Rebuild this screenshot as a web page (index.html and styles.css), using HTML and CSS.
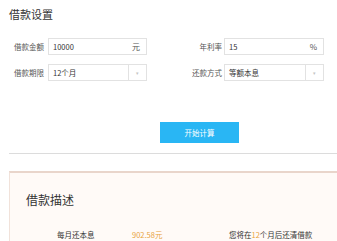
FILE: index.html
```html
<!DOCTYPE html>
<html lang="zh-CN">
<head>
    <meta charset="UTF-8">
    <meta name="viewport" content="width=device-width, initial-scale=1.0">
    <link rel="stylesheet" href="styles.css">
</head>
<body>
    <div class="page">
        <h2 class="title">借款设置</h2>

        <div class="form-row">
            <div class="field">
                <label class="label">借款金额</label>
                <div class="box">
                    <span class="value">10000</span>
                    <span class="unit">元</span>
                </div>
            </div>
            <div class="field field-right">
                <label class="label">年利率</label>
                <div class="box">
                    <span class="value">15</span>
                    <span class="unit">%</span>
                </div>
            </div>
        </div>

        <div class="form-row">
            <div class="field">
                <label class="label">借款期限</label>
                <div class="box select">
                    <span class="value">12个月</span>
                    <span class="arrow">&#9662;</span>
                </div>
            </div>
            <div class="field field-right">
                <label class="label">还款方式</label>
                <div class="box select">
                    <span class="value">等额本息</span>
                    <span class="arrow">&#9662;</span>
                </div>
            </div>
        </div>

        <button class="button">开始计算</button>

        <hr class="divider">

        <div class="result">
            <h3 class="result-title">借款描述</h3>
            <div class="result-row">
                <span class="result-label">每月还本息</span>
                <span class="money">902.58元</span>
                <span class="note">您将在<em>12</em>个月后还清借款</span>
            </div>
        </div>
    </div>
</body>
</html>
```

FILE: styles.css
```css
body {
    margin: 0;
    font-family: "Noto Sans CJK SC", "Noto Sans", sans-serif;
    color: #333;
    background: #fff;
    overflow: hidden;
}

.page {
    padding-left: 9px;
}

.title {
    margin: 0;
    padding-top: 6px;
    font-size: 11px;
    line-height: 16px;
    font-weight: normal;
}

.form-row {
    display: flex;
    gap: 25px;
    margin-top: 9px;
}

.form-row:first-of-type {
    margin-top: 16px;
}

.field {
    display: flex;
    align-items: center;
}

.label {
    width: 35px;
    margin-right: 4px;
    text-align: right;
    font-size: 7.5px;
    color: #555;
    white-space: nowrap;
}

.field-right .label {
    width: 50px;
    margin-right: 2px;
}

.box {
    display: flex;
    align-items: center;
    width: 99px;
    height: 17px;
    box-sizing: border-box;
    border: 1px solid #e2e2e2;
    font-size: 7.5px;
    color: #333;
}

.field-right .box {
    width: 100px;
}

.value {
    flex: 1;
    padding-left: 4px;
}

.unit {
    padding-right: 6px;
    font-size: 8px;
    color: #555;
}

.arrow {
    width: 17px;
    height: 100%;
    border-left: 1px solid #e2e2e2;
    display: flex;
    align-items: center;
    justify-content: center;
    font-size: 5px;
    color: #c4c4c4;
}

.button {
    display: block;
    margin: 41px 0 0 151px;
    width: 79px;
    height: 21px;
    border: none;
    background: #29b6f4;
    color: #fff;
    font-family: inherit;
    font-size: 7.5px;
    padding: 0;
}

.divider {
    margin: 10px 0 0;
    border: none;
    border-top: 1px solid #dcdcdc;
}

.result {
    margin-top: 17px;
    background: #fffaf7;
    border-top: 2px solid #e9d5cb;
    border-left: 1px solid #f1e2da;
    height: 80px;
}

.result-title {
    margin: 0;
    padding: 20px 0 0 16px;
    font-size: 12px;
    line-height: 14px;
    font-weight: normal;
}

.result-row {
    display: flex;
    align-items: center;
    margin-top: 22px;
    font-size: 7.5px;
    line-height: 12px;
}

.result-label {
    margin-left: 47px;
    width: 75px;
}

.money {
    width: 97px;
    color: #e8a33d;
}

.note em {
    font-style: normal;
    color: #e8a33d;
}
```
